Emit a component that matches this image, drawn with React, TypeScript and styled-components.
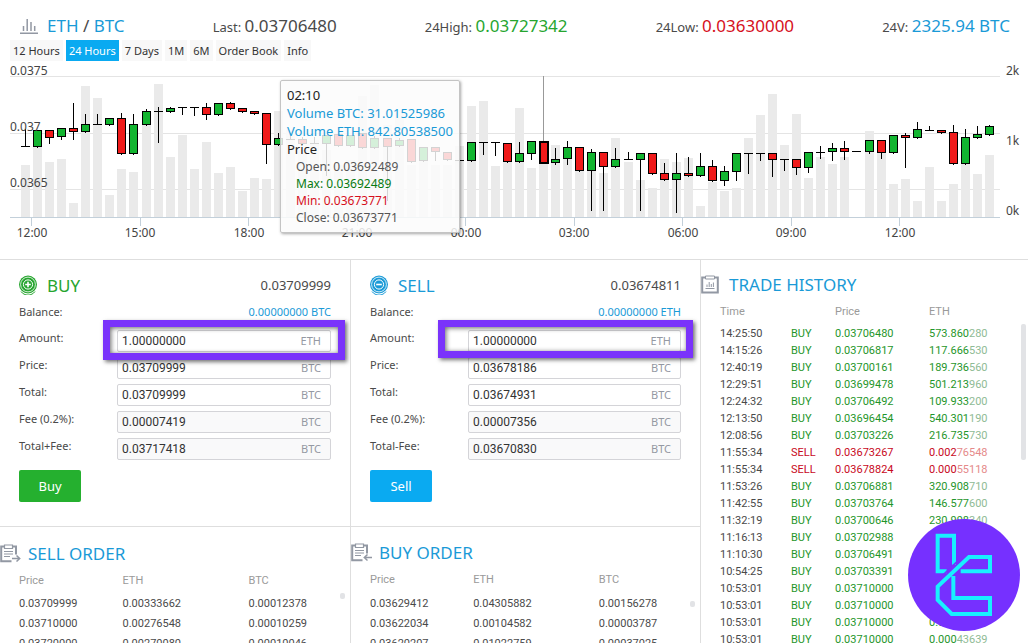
import React from "react";
import styled, { createGlobalStyle, css } from "styled-components";

const sans = `"Noto Sans", "Open Sans", sans-serif`;
const narrow = `Roboto, "Liberation Sans", sans-serif`;

const c = {
  blue: "#1a9ad7",
  button: "#0aaaf1",
  green: "#26a52f",
  red: "#d60f1c",
  text: "#4a4a4a",
  muted: "#9a9a9a",
  line: "#dedede",
  purple: "#7a33fb",
};

const GlobalStyle = createGlobalStyle`
  * { box-sizing: border-box; }
  body { margin: 0; background: #fff; color: ${c.text}; font: 11px/17px ${sans}; }
  h1, h2, p, dl, dd { margin: 0; font-weight: 400; }
  button, input { font: inherit; }
`;

const Page = styled.div`
  position: relative;
  display: flex;
  flex-direction: column;
  height: 100vh;
  overflow: hidden;
`;

/* ---------- ticker ---------- */

const Ticker = styled.header`
  display: flex;
  justify-content: space-between;
  align-items: center;
  height: 40px;
  padding: 12px 18px 0 20px;
  line-height: 24px;
`;

const Pair = styled.h1`
  display: flex;
  align-items: center;
  gap: 9px;
  font-size: 17px;
  a { color: ${c.blue}; text-decoration: none; }
`;

const Stat = styled.p<{ $tone?: string }>`
  font-size: 13px;
  strong { font-size: 17px; font-weight: 400; color: ${(p) => p.$tone ?? c.text}; }
`;

const Tabs = styled.nav`
  display: flex;
  gap: 3px;
  padding: 0 10px;
`;

const Tab = styled.button<{ $active?: boolean }>`
  height: 21px;
  padding: 0 3px;
  border: 0;
  background: ${(p) => (p.$active ? c.button : "#f8f8f8")};
  color: ${(p) => (p.$active ? "#fff" : "#333")};
`;

/* ---------- chart ---------- */

const ChartArea = styled.section`
  position: relative;
  svg { display: block; width: 100%; height: auto; }
  text { font: 12px ${sans}; fill: #444; }
`;

const Tooltip = styled.div`
  position: absolute;
  left: 280px;
  top: 19px;
  width: 180px;
  padding: 5px 6px 6px;
  border: 1px solid #c4c4c4;
  border-radius: 2px;
  background: rgba(252, 252, 252, 0.84);
  box-shadow: 1px 1px 3px rgba(0, 0, 0, 0.35);
  font-size: 13px;
  line-height: 18px;
  color: #222;
  white-space: nowrap;
`;

const TipLine = styled.p<{ $tone?: string; $sub?: boolean }>`
  color: ${(p) => p.$tone ?? "inherit"};
  ${(p) => p.$sub && css`padding-left: 9px; font-size: 12px; line-height: 17px;`}
`;

type Candle = [vol: number, kind: "g" | "r" | "k", high: number, top: number, bottom: number, low: number];

const candles: Candle[] = [
  [165, "k", 129, 146, 146, 146], [147, "g", 130, 130, 147, 147], [162, "r", 130, 130, 138, 143],
  [159, "g", 128, 128, 137, 139], [203, "r", 103, 128, 132, 139], [86, "g", 114, 124, 132, 132],
  [98, "k", 114, 124, 124, 124], [195, "g", 118, 118, 125, 125], [169, "r", 113, 118, 154, 154],
  [172, "g", 114, 124, 154, 154], [125, "g", 109, 111, 125, 125], [84, "k", 107, 111, 111, 142],
  [157, "g", 107, 108, 112, 112], [135, "k", 107, 107, 107, 114], [169, "k", 107, 107, 107, 115],
  [142, "r", 103, 107, 115, 119], [173, "g", 103, 103, 115, 115], [167, "r", 102, 103, 109, 109],
  [191, "r", 108, 108, 112, 112], [178, "r", 111, 111, 114, 114], [179, "r", 113, 113, 145, 163],
  [111, "g", 133, 138, 145, 145], [130, "k", 133, 139, 139, 139], [150, "r", 137, 139, 144, 144],
  [140, "k", 137, 143, 143, 143], [150, "g", 135, 135, 144, 175], [165, "r", 134, 134, 146, 146],
  [160, "g", 135, 135, 146, 146], [96, "r", 133, 133, 148, 148], [85, "g", 136, 138, 148, 148],
  [125, "r", 138, 138, 147, 200], [110, "g", 138, 140, 146, 146], [165, "r", 139, 139, 162, 162],
  [160, "g", 147, 147, 161, 161], [165, "r", 147, 147, 152, 160], [165, "r", 152, 152, 160, 160],
  [146, "k", 148, 160, 160, 160], [106, "g", 142, 142, 161, 161], [101, "k", 142, 142, 142, 154],
  [166, "k", 142, 142, 142, 155], [162, "r", 143, 143, 162, 162], [108, "g", 142, 153, 162, 162],
  [168, "g", 141, 141, 154, 159], [163, "r", 141, 141, 163, 163], [145, "g", 148, 159, 163, 164],
  [159, "g", 141, 147, 159, 164], [171, "r", 147, 147, 171, 171], [171, "g", 149, 152, 171, 210],
  [173, "r", 152, 152, 167, 210], [138, "g", 148, 159, 167, 167], [162, "k", 152, 159, 159, 159],
  [180, "g", 153, 153, 160, 210], [188, "r", 153, 153, 174, 174], [159, "r", 163, 173, 180, 180],
  [162, "g", 153, 173, 180, 212], [158, "r", 157, 173, 176, 176], [206, "g", 153, 166, 176, 176],
  [182, "r", 160, 166, 181, 181], [191, "g", 166, 171, 181, 185], [188, "g", 153, 153, 172, 180],
  [138, "k", 153, 153, 153, 173], [115, "k", 153, 153, 153, 160], [94, "r", 153, 153, 160, 176],
  [145, "k", 159, 159, 159, 170], [114, "r", 159, 159, 168, 174], [178, "g", 152, 152, 168, 172],
  [157, "k", 146, 152, 152, 158], [164, "g", 143, 148, 152, 160], [157, "r", 141, 148, 152, 159],
  [217, "k", 151, 151, 151, 151], [131, "g", 140, 140, 152, 153], [153, "r", 140, 140, 153, 158],
  [184, "g", 135, 135, 153, 153], [179, "r", 133, 135, 138, 167], [201, "g", 122, 129, 138, 138],
  [167, "k", 126, 130, 130, 130], [201, "r", 130, 130, 133, 133], [184, "r", 125, 132, 164, 164],
  [163, "g", 129, 137, 164, 164], [174, "g", 126, 134, 138, 138], [155, "g", 125, 126, 135, 135],
];

const times = ["12:00", "15:00", "18:00", "21:00", "00:00", "03:00", "06:00", "09:00", "12:00"];
const hovered = 43;

function Chart() {
  return (
    <svg viewBox="0 61 1028 198" role="img" aria-label="ETH / BTC price and volume">
      {[76, 133, 189].map((y) => (
        <rect key={y} x={10} y={y} width={990} height={1} fill="#e4e4e4" />
      ))}
      {candles.map(([vol], i) => (
        <rect key={i} x={Math.round(21 + i * 12.05)} y={vol} width={9} height={217 - vol} fill="#eaeaea" />
      ))}
      <rect x={10} y={217} width={990} height={1} fill="#c3d0da" />
      <rect x={543} y={76} width={1} height={65} fill="#999" />
      {candles.map(([, kind, high, t, b, low], i) => {
        const x = Math.round(21 + i * 12.05);
        return (
          <g key={i} shapeRendering="crispEdges">
            <rect x={x + 4} y={high} width={1} height={low - high + 1} fill="#000" />
            {kind === "k" ? (
              <rect x={x} y={t} width={9} height={1} fill="#000" />
            ) : (
              <rect
                x={x + 0.5}
                y={t + 0.5}
                width={8}
                height={b - t - 1}
                fill={kind === "g" ? "#12b530" : "#f01a1a"}
                stroke="#000"
                strokeWidth={i === hovered ? 2 : 1}
              />
            )}
          </g>
        );
      })}
      {["0.0375", "0.037", "0.0365"].map((label, i) => (
        <text key={label} x={10} y={75 + i * 56}>{label}</text>
      ))}
      {["2k", "1k", "0k"].map((label, i) => (
        <text key={label} x={1006} y={75 + i * 70}>{label}</text>
      ))}
      {times.map((label, i) => (
        <g key={i}>
          <rect x={Math.round(31 + i * 108.5)} y={218} width={1} height={8} fill="#c3d0da" />
          <text x={Math.round(31.5 + i * 108.5)} y={237} textAnchor="middle">{label}</text>
        </g>
      ))}
    </svg>
  );
}

/* ---------- panels ---------- */

const Panels = styled.main`
  flex: 1;
  min-height: 0;
  display: grid;
  grid-template-columns: 350fr 350fr 328fr;
  border-top: 1px solid ${c.line};
`;

const Column = styled.div<{ $ruled?: boolean }>`
  min-width: 0;
  overflow: hidden;
  border-left: ${(p) => (p.$ruled ? `1px solid ${c.line}` : "0")};
`;

const TradeForm = styled.form`
  padding: 14px 19px 24px;
  border-bottom: 1px solid ${c.line};
`;

const FormHead = styled.div<{ $tone: string }>`
  display: flex;
  align-items: center;
  gap: 10px;
  height: 22px;
  color: ${(p) => p.$tone};
  h2 { flex: 1; font-size: 17px; }
  output { font-size: 13px; color: ${c.text}; }
`;

const Balance = styled.p`
  display: flex;
  justify-content: space-between;
  padding: 7px 0 10px;
  span:last-child { color: ${c.blue}; }
`;

const Row = styled.div`
  display: grid;
  grid-template-columns: 98px 1fr;
  margin-bottom: 5px;
  line-height: 16px;
`;

const Field = styled.div<{ $locked?: boolean }>`
  position: relative;
  display: flex;
  align-items: center;
  height: 22px;
  padding: 0 9px 0 4px;
  border: 1px solid #d4d4d8;
  border-radius: 2px;
  background: ${(p) => (p.$locked ? "#f9f9fa" : "#fff")};
  color: #9599a3;
  input {
    flex: 1;
    min-width: 0;
    padding: 0;
    border: 0;
    outline: 0;
    background: none;
    font: 12px ${narrow};
    color: #333;
  }
`;

const Highlight = styled.div<{ $side: "buy" | "sell" }>`
  position: absolute;
  z-index: 1;
  inset: ${(p) => (p.$side === "buy" ? "-11px -15px -9px -15px" : "-11px -13px -7px -31px")};
  border: 7px solid ${c.purple};
  box-shadow: 2px 2px 4px rgba(0, 0, 0, 0.55), inset 1px 1px 5px rgba(0, 0, 0, 0.6);
  pointer-events: none;
`;

const Submit = styled.button<{ $tone: string }>`
  display: block;
  width: 62px;
  height: 32px;
  margin-top: 10px;
  border: 0;
  border-radius: 2px;
  background: ${(p) => p.$tone};
  color: #fff;
  font-size: 13px;
`;

const SectionHead = styled.h2<{ $pad: number; $gap: number }>`
  display: flex;
  align-items: center;
  gap: ${(p) => p.$gap}px;
  height: 22px;
  margin-top: ${(p) => p.$pad}px;
  font-size: 17px;
  color: ${c.blue};
`;

const Scroller = styled.div`
  position: relative;
  margin-top: 10px;
`;

const Thumb = styled.div<{ $top: number; $size: number; $right: number }>`
  position: absolute;
  right: ${(p) => p.$right}px;
  top: ${(p) => p.$top}px;
  width: 5px;
  height: ${(p) => p.$size}px;
  border-radius: 2px;
  background: #e2e3e6;
`;

const Table = styled.table<{ $row: number; $head: number }>`
  width: 100%;
  table-layout: fixed;
  border-collapse: collapse;
  font: 11px ${narrow};
  th { height: ${(p) => p.$head}px; padding: 0; text-align: left; font-weight: 400; color: ${c.muted}; vertical-align: top; }
  td { height: ${(p) => p.$row}px; padding: 0; }
  th:first-child, td:first-child { padding-left: 19px; }
`;

const Side = styled.tr<{ $sell?: boolean }>`
  color: ${(p) => (p.$sell ? "#c8081c" : "#1f962b")};
  td:first-child { color: ${c.text}; }
  span { color: ${(p) => (p.$sell ? "#e58a8a" : "#8fbb95")}; }
`;

const Watermark = styled.svg`
  position: absolute;
  right: 8px;
  bottom: 12px;
  width: 112px;
  height: 112px;
`;

/* ---------- icons ---------- */

const BarsIcon = () => (
  <svg width="18" height="16" viewBox="0 0 18 16" stroke="#9298a3" strokeWidth="1.5">
    <path d="M0 15.2H18M3.5 13V8M7.2 13V1M11 13V4M14.7 13V8" />
  </svg>
);

const CoinIcon = ({ tone, plus }: { tone: string; plus?: boolean }) => (
  <svg width="18" height="20" viewBox="0 0 18 20" fill="none">
    <path d="M2 15.5a8.6 8.6 0 0 0 14 0" stroke={tone} strokeWidth="1" transform="translate(0 1)" />
    <circle cx="9" cy="9.5" r="9" fill={tone} />
    <circle cx="9" cy="9.5" r="7.4" stroke="#fff" strokeWidth=".8" />
    <circle cx="9" cy="9.5" r="4.6" stroke="#fff" strokeWidth="1" />
    <path d={plus ? "M6.2 9.5h5.6M9 6.7v5.6" : "M6.2 9.5h5.6"} stroke="#fff" strokeWidth="1.6" />
  </svg>
);

const HistoryIcon = () => (
  <svg width="18" height="19" viewBox="0 0 18 19" fill="none" stroke="#9298a3">
    <path d="M1.2 2.5H16.8V17.5H1.2Z" strokeWidth="2" />
    <path d="M4.5 1H13.5V4H4.5Z" fill="#fff" />
    <path d="M4.5 13.5H13.5M6 12V9.5M8.2 12V7M10.3 12V9M12.4 12V7.5" />
  </svg>
);

const OrderIcon = ({ inward }: { inward?: boolean }) => (
  <svg width="21" height="19" viewBox="0 0 21 19" fill="none" stroke="#9298a3">
    <path d="M11.5 17.3H1.2V2.5H16V10.5" strokeWidth="2" />
    <path d="M4.5 1H12.5V4.5H4.5Z" fill="#fff" strokeWidth="1.2" />
    <path d="M4 7.5H13M4 10H13M4 12.5H10" />
    <path d={inward ? "M13 14.5H21M16.5 11.5L13.3 14.5L16.5 17.5" : "M12 14.5H20M16.5 11.5L19.7 14.5L16.5 17.5"} strokeWidth="1.5" />
  </svg>
);

/* ---------- data ---------- */

const orders = {
  sell: [
    ["0.03709999", "0.00333662", "0.00012378"],
    ["0.03710000", "0.00276548", "0.00010259"],
    ["0.03720000", "0.00270080", "0.00010046"],
  ],
  buy: [
    ["0.03629412", "0.04305882", "0.00156278"],
    ["0.03622034", "0.00104582", "0.00003787"],
    ["0.03620207", "0.01022759", "0.00037025"],
  ],
};

const trades = [
  ["14:25:50", "BUY", "0.03706480", "573.860", "280"],
  ["14:15:26", "BUY", "0.03706817", "117.666", "530"],
  ["12:40:19", "BUY", "0.03700161", "189.736", "560"],
  ["12:29:51", "BUY", "0.03699478", "501.213", "960"],
  ["12:24:32", "BUY", "0.03706492", "109.933", "200"],
  ["12:13:50", "BUY", "0.03696454", "540.301", "190"],
  ["12:08:56", "BUY", "0.03703226", "216.735", "730"],
  ["11:55:34", "SELL", "0.03673267", "0.002", "76548"],
  ["11:55:34", "SELL", "0.03678824", "0.000", "55118"],
  ["11:53:26", "BUY", "0.03706881", "320.908", "710"],
  ["11:42:55", "BUY", "0.03703764", "146.577", "600"],
  ["11:32:19", "BUY", "0.03700646", "230.998", "340"],
  ["11:16:13", "BUY", "0.03702988", "0.002", "69730"],
  ["11:10:30", "BUY", "0.03706491", "0.004", "31200"],
  ["10:54:25", "BUY", "0.03703391", "0.001", "87440"],
  ["10:53:01", "BUY", "0.03710000", "0.000", "43639"],
  ["10:53:01", "BUY", "0.03710000", "0.000", "43639"],
  ["10:53:01", "BUY", "0.03710000", "0.000", "43639"],
  ["10:53:01", "BUY", "0.03710000", "0.000", "43639"],
];

interface TradeProps {
  side: "buy" | "sell";
  price: string;
  balance: string;
  rows: [label: string, value: string, unit: string][];
}

function TradePanel({ side, price, balance, rows }: TradeProps) {
  const buy = side === "buy";
  return (
    <TradeForm onSubmit={(e) => e.preventDefault()}>
      <FormHead $tone={buy ? c.green : c.blue}>
        <CoinIcon tone={buy ? c.green : c.blue} plus={buy} />
        <h2>{buy ? "BUY" : "SELL"}</h2>
        <output>{price}</output>
      </FormHead>
      <Balance>
        <span>Balance:</span>
        <span>{balance}</span>
      </Balance>
      {rows.map(([label, value, unit], i) => (
        <Row key={label}>
          <label htmlFor={`${side}-${i}`}>{label}</label>
          <Field $locked={i > 2}>
            <input id={`${side}-${i}`} defaultValue={value} readOnly={i > 2} />
            {unit}
            {i === 0 && <Highlight $side={side} />}
          </Field>
        </Row>
      ))}
      <Submit type="submit" $tone={buy ? "#25b02f" : c.button}>{buy ? "Buy" : "Sell"}</Submit>
    </TradeForm>
  );
}

function Orders({ side }: { side: "buy" | "sell" }) {
  const buy = side === "buy";
  return (
    <section>
      <SectionHead $pad={buy ? 14 : 15} $gap={7}>
        <OrderIcon inward={buy} />
        {buy ? "BUY ORDER" : "SELL ORDER"}
      </SectionHead>
      <Scroller>
        <Table $row={20} $head={buy ? 20 : 19}>
          <colgroup>
            <col style={{ width: "35%" }} />
            <col style={{ width: "36%" }} />
            <col />
          </colgroup>
          <thead>
            <tr><th>Price</th><th>ETH</th><th>BTC</th></tr>
          </thead>
          <tbody>
            {orders[side].map((row) => (
              <tr key={row[0]}>{row.map((v, i) => <td key={i}>{v}</td>)}</tr>
            ))}
          </tbody>
        </Table>
        <Thumb $top={buy ? 28 : 19} $size={6} $right={5} />
      </Scroller>
    </section>
  );
}

function History() {
  return (
    <section>
      <SectionHead $pad={13} $gap={10}>
        <HistoryIcon />
        TRADE HISTORY
      </SectionHead>
      <Scroller>
        <Table $row={17} $head={20}>
          <colgroup>
            <col style={{ width: "90px" }} />
            <col style={{ width: "44px" }} />
            <col style={{ width: "94px" }} />
            <col />
          </colgroup>
          <thead>
            <tr><th>Time</th><th /><th>Price</th><th>ETH</th></tr>
          </thead>
          <tbody>
            {trades.map(([time, kind, price, lead, rest], i) => (
              <Side key={i} $sell={kind === "SELL"}>
                <td>{time}</td><td>{kind}</td><td>{price}</td>
                <td>{lead}<span>{rest}</span></td>
              </Side>
            ))}
          </tbody>
        </Table>
        <Thumb $top={19} $size={136} $right={2} />
      </Scroller>
    </section>
  );
}

export default function App() {
  return (
    <Page>
      <GlobalStyle />
      <Ticker>
        <Pair>
          <BarsIcon />
          <span><a href="#eth">ETH</a> / <a href="#btc">BTC</a></span>
        </Pair>
        <Stat>Last: <strong>0.03706480</strong></Stat>
        <Stat $tone={c.green}>24High: <strong>0.03727342</strong></Stat>
        <Stat $tone={c.red}>24Low: <strong>0.03630000</strong></Stat>
        <Stat $tone={c.blue}>24V: <strong>2325.94 BTC</strong></Stat>
      </Ticker>
      <Tabs>
        {["12 Hours", "24 Hours", "7 Days", "1M", "6M", "Order Book", "Info"].map((t) => (
          <Tab key={t} type="button" $active={t === "24 Hours"}>{t}</Tab>
        ))}
      </Tabs>
      <ChartArea>
        <Chart />
        <Tooltip>
          <TipLine>02:10</TipLine>
          <TipLine $tone={c.blue}>Volume BTC: 31.01525986</TipLine>
          <TipLine $tone={c.blue}>Volume ETH: 842.80538500</TipLine>
          <TipLine>Price</TipLine>
          <TipLine $sub $tone="#555">Open: 0.03692489</TipLine>
          <TipLine $sub $tone="#087a12">Max: 0.03692489</TipLine>
          <TipLine $sub $tone="#d60f1c">Min: 0.03673771</TipLine>
          <TipLine $sub $tone="#555">Close: 0.03673771</TipLine>
        </Tooltip>
      </ChartArea>
      <Panels>
        <Column>
          <TradePanel
            side="buy"
            price="0.03709999"
            balance="0.00000000 BTC"
            rows={[
              ["Amount:", "1.00000000", "ETH"],
              ["Price:", "0.03709999", "BTC"],
              ["Total:", "0.03709999", "BTC"],
              ["Fee (0.2%):", "0.00007419", "BTC"],
              ["Total+Fee:", "0.03717418", "BTC"],
            ]}
          />
          <Orders side="sell" />
        </Column>
        <Column $ruled>
          <TradePanel
            side="sell"
            price="0.03674811"
            balance="0.00000000 ETH"
            rows={[
              ["Amount:", "1.00000000", "ETH"],
              ["Price:", "0.03678186", "BTC"],
              ["Total:", "0.03674931", "BTC"],
              ["Fee (0.2%):", "0.00007356", "BTC"],
              ["Total-Fee:", "0.03670830", "BTC"],
            ]}
          />
          <Orders side="buy" />
        </Column>
        <Column $ruled>
          <History />
        </Column>
      </Panels>
      <Watermark viewBox="24 27 336 336" aria-hidden="true">
        <circle cx="192" cy="195" r="168" fill="#7630ff" />
        <g fill="none" stroke="#18f0ff" strokeWidth="12">
          <path d="M140 184H113V77H162V164" />
          <path d="M182 184H270V141H207L113 230V270L155 312H270V264H160V198" />
        </g>
        <path d="M128 196L172 154" stroke="#7630ff" strokeWidth="5" />
      </Watermark>
    </Page>
  );
}
